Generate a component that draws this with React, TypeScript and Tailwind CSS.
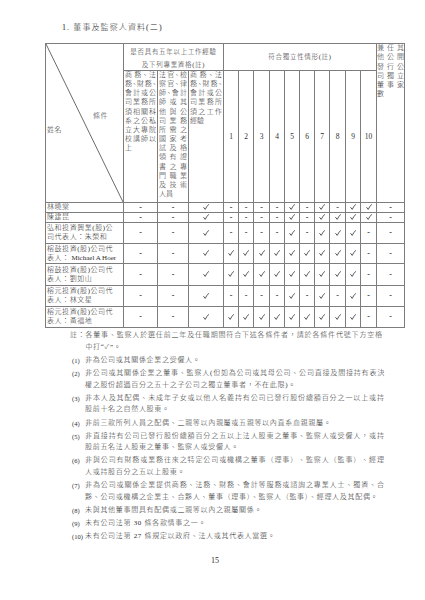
import type { ReactNode } from 'react'

const FONT = "font-['Liberation_Serif','Noto_Sans_CJK_TC','DejaVu_Sans',serif]"

const colA = ['商務、法', '務、財務、', '會計或公', '司業務所', '須相關科', '系之公私', '立大專院', '校講師以', '上']
const colB = ['法官、檢', '察官、律', '師、會計', '師或其', '他與公', '司業務', '所需之', '國家考', '試及格', '領有證', '書之專', '門職業', '及技術', '人員']
const colC = ['商務、法', '務、財務、', '會計或公', '司業務所', '須之工作', '經驗']
const colLast = ['兼任其', '他公開', '發行公', '司獨立', '董事家', '數']

const rows: { name: ReactNode[]; marks: string }[] = [
  { name: ['林曉棠'], marks: '--v----v-v-vv-' },
  { name: ['陳建昆'], marks: '--v----v-vvvv-' },
  { name: ['弘和投資興業(股)公', '司代表人：朱榮和'], marks: '--v----v-vvv--' },
  {
    name: [
      '榕鼓投資(股)公司代',
      <>
        表人：<span className="tracking-normal"> Michael A Hoer</span>
      </>,
    ],
    marks: '--vvvvvvvvvv--',
  },
  { name: ['榕鼓投資(股)公司代', '表人：劉如山'], marks: '--vvvvvvvvvv--' },
  { name: ['榕元投資(股)公司代', '表人：林文星'], marks: '--v----v-v-v--' },
  { name: ['榕元投資(股)公司代', '表人：黃福地'], marks: '--vvvvvvvvvv--' },
]

const notes = [
  ['非為公司或其關係企業之受僱人。'],
  ['非公司或其關係企業之董事、監察人(但如為公司或其母公司、公司直接及間接持有表決', '權之股份超過百分之五十之子公司之獨立董事者，不在此限)。'],
  ['非本人及其配偶、未成年子女或以他人名義持有公司已發行股份總額百分之一以上或持', '股前十名之自然人股東。'],
  ['非前三款所列人員之配偶、二親等以內親屬或五親等以內直系血親親屬。'],
  ['非直接持有公司已發行股份總額百分之五以上法人股東之董事、監察人或受僱人，或持', '股前五名法人股東之董事、監察人或受僱人。'],
  ['非與公司有財務或業務往來之特定公司或機構之董事（理事）、監察人（監事）、經理', '人或持股百分之五以上股東。'],
  ['非為公司或關係企業提供商務、法務、財務、會計等服務或諮詢之專業人士、獨資、合', '夥、公司或機構之企業主、合夥人、董事（理事）、監察人（監事）、經理人及其配偶。'],
  ['未與其他董事間具有配偶或二親等以內之親屬關係。'],
  ['未有公司法第 30 條各款情事之一。'],
  ['未有公司法第 27 條規定以政府、法人或其代表人當選。'],
]

// every line but the last is spread over the full width
function Lines({ lines }: { lines: string[] }) {
  return (
    <>
      {lines.map((l, i) =>
        i < lines.length - 1 ? (
          <div key={i} className="flex justify-between whitespace-nowrap">
            {[...l].map((c, j) => (
              <span key={j}>{c}</span>
            ))}
          </div>
        ) : (
          <div key={i} className="whitespace-nowrap">
            {l}
          </div>
        )
      )}
    </>
  )
}

function Check() {
  return (
    <svg width="6" height="6" viewBox="0 0 6 6" className="-mt-[1px]">
      <path d="M0.7 3.5 L2.2 5.4 Q3.6 2.4 5.6 0.5" fill="none" stroke="#222" strokeWidth="0.75" strokeLinecap="round" strokeLinejoin="round" />
    </svg>
  )
}

function Mark({ v }: { v: string }) {
  return (
    <div className="bg-white flex items-center justify-center">
      {v === 'v' ? <Check /> : <span className="font-bold text-[8px] leading-none">-</span>}
    </div>
  )
}

export default function App() {
  return (
    <div className={`w-[425px] h-[600px] bg-white text-[#2e2e2e] font-light ${FONT}`}>
      <div className="pl-[45px] pt-[23px]">
        <h1 className="pl-[17px] text-[8px] leading-[10px] tracking-[1.1px] font-light">1. 董事及監察人資料(二)</h1>

        <div className="mt-[10px] w-[360px] grid grid-cols-[77px_33px_30px_34px_14px_14px_15px_14px_14px_14px_14px_15px_14px_15px_27px] grid-rows-[26px_131px_9px_9px_20px_19px_21px_20px_20px] gap-px border border-[#7d7d7d] bg-[#7d7d7d] text-[7px]">
          <div className="row-span-2 bg-white relative overflow-hidden pt-[68px] leading-[9px] tracking-[0.5px]">
            <svg className="absolute inset-0 w-full h-full" preserveAspectRatio="none" viewBox="0 0 77 158">
              <line x1="0" y1="0" x2="77" y2="158" stroke="#444" strokeWidth="0.8" />
            </svg>
            <div className="ml-[47px]">條件</div>
            <div className="ml-[1px] mt-[5px]">姓名</div>
          </div>
          <div className="col-span-3 bg-white flex flex-col items-center justify-center pt-px text-[6.5px] leading-[13px] tracking-[0.7px]">
            <div>是否具有五年以上工作經驗</div>
            <div>及下列專業資格(註)</div>
          </div>
          <div className="col-span-10 bg-white flex items-center justify-center text-[6.5px] tracking-[0.7px]">
            符合獨立性情形(註)
          </div>
          <div className="row-span-2 bg-white leading-[9.3px]">
            <Lines lines={colLast} />
          </div>

          <div className="bg-white px-px leading-[9.15px] [font-feature-settings:'halt']">
            <Lines lines={colA} />
          </div>
          <div className="bg-white px-px leading-[9.15px] [font-feature-settings:'halt']">
            <Lines lines={colB} />
          </div>
          <div className="bg-white px-px leading-[9.15px] [font-feature-settings:'halt']">
            <Lines lines={colC} />
          </div>
          {[1, 2, 3, 4, 5, 6, 7, 8, 9, 10].map((n) => (
            <div key={n} className="bg-white flex items-center justify-center text-[7.5px]">
              {n}
            </div>
          ))}

          {rows.map((r, i) => (
            <div key={i} className="contents">
              <div className="bg-white px-px flex flex-col justify-center leading-[9px] tracking-[0.55px] whitespace-nowrap">
                {r.name.map((n, j) => (
                  <div key={j}>{n}</div>
                ))}
              </div>
              {r.marks.split('').map((m, j) => (
                <Mark key={j} v={m} />
              ))}
            </div>
          ))}
        </div>

        <div className="mt-[2px] pl-[25px] text-[7px] tracking-[0.7px] leading-[11.5px]">
          <div className="flex">
            <span className="w-[15.4px] shrink-0 whitespace-nowrap">註：</span>
            <div className="w-[297.6px]">
              <Lines lines={['各董事、監察人於選任前二年及任職期間符合下述各條件者，請於各條件代號下方空格', '中打“✓”。']} />
            </div>
          </div>
        </div>

        <div className="mt-[2px] pl-[27px] flex flex-col gap-[1.7px] text-[7px] tracking-[0.7px] leading-[11.5px]">
          {notes.map((lines, i) => (
            <div key={i} className="flex">
              <span className="min-w-[13px] pr-[2px] shrink-0 text-[6.5px] tracking-normal">({i + 1})</span>
              <div className="w-[300px]">
                <Lines lines={lines} />
              </div>
            </div>
          ))}
        </div>
      </div>

      <div className="mt-[13px] pl-[5px] text-center text-[8px] leading-[10px]">15</div>
    </div>
  )
}
